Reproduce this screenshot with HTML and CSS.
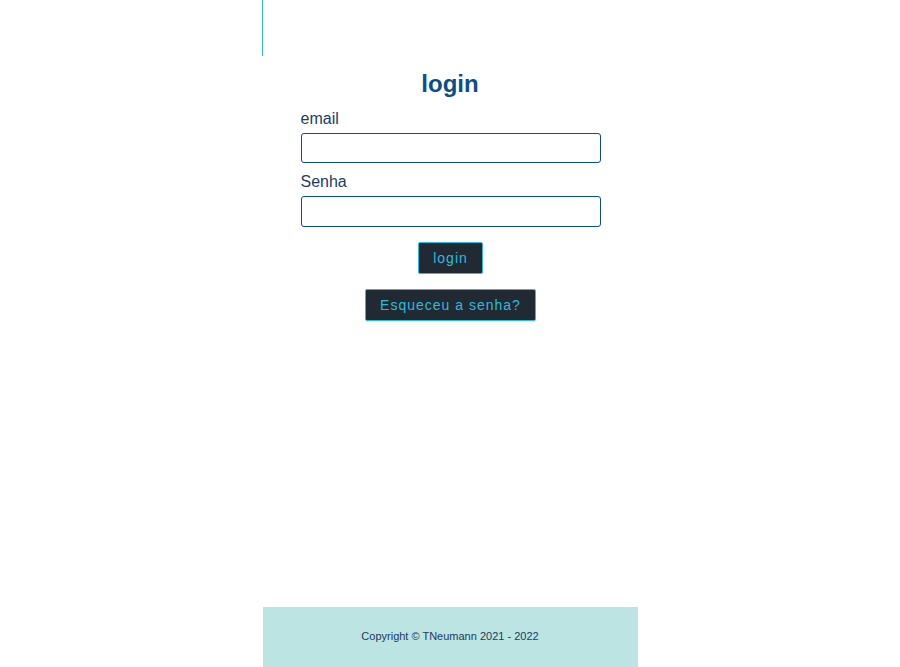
FILE: index.html
```html
<!DOCTYPE html>
<html lang="pt-BR">
<head>
<meta charset="utf-8">
<title>login</title>
<link rel="stylesheet" href="styles.css">
</head>
<body>
<div class="page">
  <header class="topbar"></header>
  <main class="content">
    <h1 class="title">login</h1>
    <form class="form">
      <label class="label" for="email">email</label>
      <input class="input" id="email" type="text">
      <label class="label" for="senha">Senha</label>
      <input class="input" id="senha" type="password">
      <div class="actions">
        <button type="button" class="btn">login</button>
        <button type="button" class="btn">Esqueceu a senha?</button>
      </div>
    </form>
  </main>
  <footer class="footer">Copyright © TNeumann 2021 - 2022</footer>
</div>
</body>
</html>
```
FILE: styles.css
```css
html, body {
  margin: 0;
  padding: 0;
  background: #ffffff;
}
body {
  font-family: "Liberation Sans", Arial, sans-serif;
}
.page {
  width: 375px;
  margin: 0 auto;
  min-height: 100vh;
  display: flex;
  flex-direction: column;
}
.topbar {
  height: 56px;
  margin-left: -1px;
  border-left: 1px solid #2bbcdc;
}
.content {
  flex: 1;
  display: flex;
  flex-direction: column;
  align-items: center;
}
.title {
  margin: 14px 0 0;
  font-size: 24px;
  line-height: 28px;
  font-weight: bold;
  color: #0c4e88;
}
.form {
  width: 300px;
  display: flex;
  flex-direction: column;
  margin: 10px 0 0 1px;
}
.label {
  font-size: 16px;
  line-height: 18px;
  padding-top: 2px;
  color: #1c3d63;
  margin-bottom: 5px;
}
.input {
  box-sizing: border-box;
  height: 30px;
  width: 300px;
  border: 1px solid #0c4e88;
  border-radius: 3px;
  margin: 0 0 8px;
  padding: 0 6px;
  font-size: 16px;
  background: #fff;
}
.input + .label + .input {
  height: 31px;
}
.actions {
  display: flex;
  flex-direction: column;
  align-items: center;
  gap: 15px;
  margin-top: 7px;
}
.btn {
  box-sizing: border-box;
  height: 32px;
  padding: 0 14px;
  background: #212a33;
  color: #2bbcdc;
  border: 1px solid #2bbcdc;
  border-radius: 2px;
  font-family: "Liberation Sans", Arial, sans-serif;
  font-size: 14px;
  letter-spacing: 1px;
  cursor: pointer;
}
.footer {
  height: 60px;
  box-sizing: border-box;
  padding-bottom: 2px;
  background: #bce4e3;
  color: #1e3a5c;
  font-size: 11px;
  display: flex;
  align-items: center;
  justify-content: center;
}
```
